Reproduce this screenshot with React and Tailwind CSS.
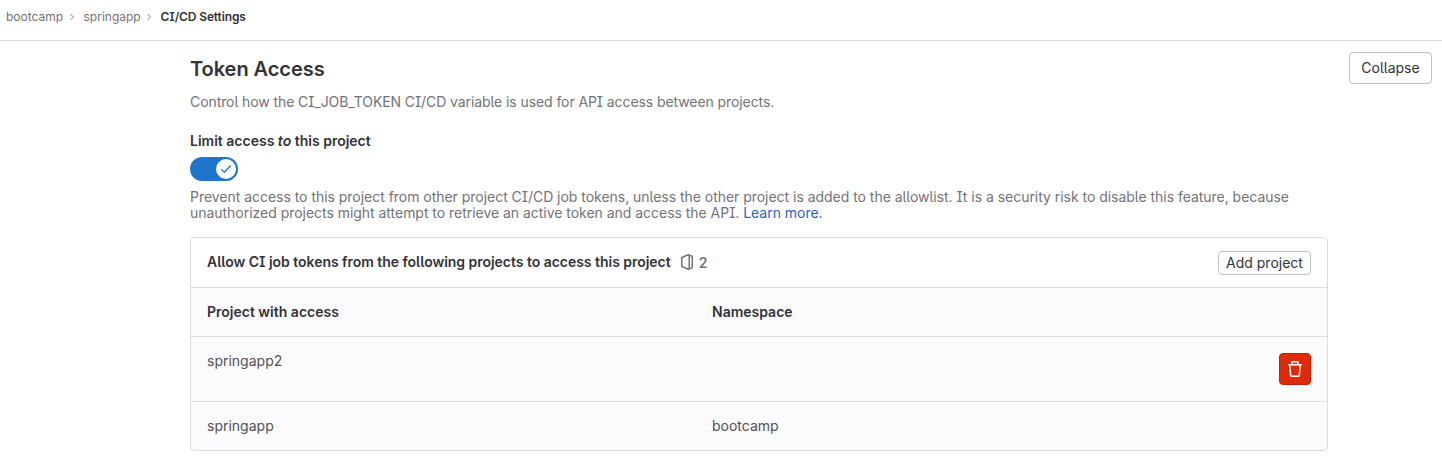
function Chevron() {
  return (
    <svg className="h-2 w-2 shrink-0" viewBox="0 0 16 16" fill="#89888d">
      <path d="M4.97 12.78a.75.75 0 0 0 1.06 1.06l5.31-5.31a.75.75 0 0 0 0-1.06L6.03 2.16a.75.75 0 0 0-1.06 1.06L9.75 8l-4.78 4.78z" />
    </svg>
  );
}

function ProjectIcon() {
  return (
    <svg className="h-4 w-4 shrink-0" viewBox="0 0 16 16" fill="#737278" fillRule="evenodd">
      <path d="M9.5 14.5l-6-2.5V4l6-2.5v13zm-6.885-1.244A1 1 0 0 1 2 12.333V3.667a1 1 0 0 1 .615-.923L8.923.115A1.5 1.5 0 0 1 10.981 1H12a2 2 0 0 1 2 2v10a2 2 0 0 1-2 2h-1.019a1.5 1.5 0 0 1-2.058.885l-6.308-2.629zM11 2.5h1a.5.5 0 0 1 .5.5v10a.5.5 0 0 1-.5.5h-1v-11z" />
    </svg>
  );
}

function TrashIcon() {
  return (
    <svg className="h-4 w-4" viewBox="0 0 16 16" fill="#fff" fillRule="evenodd">
      <path d="M5.75 3V1.5h4.5V3h-4.5zm-1.5 0V1a1 1 0 0 1 1-1h5.5a1 1 0 0 1 1 1v2h2.5a.75.75 0 0 1 0 1.5h-.365l-.743 9.653A2 2 0 0 1 11.148 16H4.852a2 2 0 0 1-1.994-1.847L2.115 4.5H1.75a.75.75 0 0 1 0-1.5h2.5zm-.63 1.5h8.76l-.734 9.538a.5.5 0 0 1-.498.462H4.852a.5.5 0 0 1-.498-.462L3.62 4.5z" />
    </svg>
  );
}

export default function App() {
  return (
    <div className="h-[462px] overflow-hidden bg-white font-['Inter',sans-serif] text-[14px] leading-4 text-[#333238] [font-feature-settings:'cv05','cv08']">
      <nav className="flex h-[41px] items-start border-b border-[#dcdcde] pt-[9px] pl-[6px] text-[12px] text-[#737278]">
        <div className="flex items-center">
          <span className="w-[62px]">bootcamp</span>
          <Chevron />
          <span className="ml-[7.5px] w-[61.5px]">springapp</span>
          <Chevron />
          <span className="ml-[7.5px] font-semibold tracking-[-0.13px] text-[#333238]">CI/CD Settings</span>
        </div>
      </nav>

      <main className="flex items-start justify-between pr-[10px] pl-[190px]">
        <section className="w-[1138px]">
          <h2 className="mt-[16px] text-[20px] leading-6 font-semibold tracking-[-0.05px]">Token Access</h2>
          <p className="mt-[13px] tracking-[-0.085px] text-[#737278]">
            Control how the CI_JOB_TOKEN CI/CD variable is used for API access between projects.
          </p>
          <div className="mt-[23px] font-semibold">
            Limit access <em>to</em> this project
          </div>
          <div className="mt-[8px] flex h-6 w-12 items-center justify-end rounded-full bg-[#1f75cb] p-[2px]">
            <div className="flex h-5 w-5 items-center justify-center rounded-full bg-white">
              <svg className="h-3 w-3" viewBox="0 0 12 12" fill="none" stroke="#1f75cb" strokeWidth="1.3" strokeLinecap="round" strokeLinejoin="round">
                <path d="M1.6 6.6l2.7 2.7 6-6.3" />
              </svg>
            </div>
          </div>
          <p className="mt-[8px] tracking-[-0.03px] whitespace-nowrap text-[#737278]">
            Prevent access to this project from other project CI/CD job tokens, unless the other project is added to the allowlist. It is a security risk to disable this feature, because
            <br />
            unauthorized projects might attempt to retrieve an active token and access the API. <a className="text-[#2f5fc4]">Learn more.</a>
          </p>

          <div className="mt-[16px] overflow-hidden rounded-[4px] border border-[#dcdcde] bg-[#fbfafd]">
            <div className="flex h-[50px] items-center border-b border-[#dcdcde] bg-white px-4 font-semibold">
              <span className="mr-2 pb-[2px] tracking-[-0.03px]">Allow CI job tokens from the following projects to access this project</span>
              <span className="flex items-center pb-px">
                <ProjectIcon />
              </span>
              <span className="ml-1 text-[#737278]">2</span>
              <button className="ml-auto h-6 w-[93px] rounded-[4px] border border-[#bfbfc3] bg-white font-normal">Add project</button>
            </div>
            <div className="grid h-[49px] grid-cols-[505px_1fr] border-b border-[#dcdcde] px-4 pt-4 font-semibold">
              <span>Project with access</span>
              <span>Namespace</span>
            </div>
            <div className="flex h-[65px] justify-between border-b border-[#dcdcde] px-4 pt-4 text-[#535158]">
              <span>springapp2</span>
              <button aria-label="Remove access" className="flex h-8 w-8 items-center justify-center rounded-[4px] border border-[#c91c00] bg-[#dd2b0e]">
                <TrashIcon />
              </button>
            </div>
            <div className="grid h-[48px] grid-cols-[505px_1fr] px-4 pt-4 text-[#535158]">
              <span>springapp</span>
              <span>bootcamp</span>
            </div>
          </div>
        </section>
        <button className="mt-[11px] h-8 w-[83px] rounded-[4px] border border-[#bfbfc3] bg-white">Collapse</button>
      </main>
    </div>
  );
}
